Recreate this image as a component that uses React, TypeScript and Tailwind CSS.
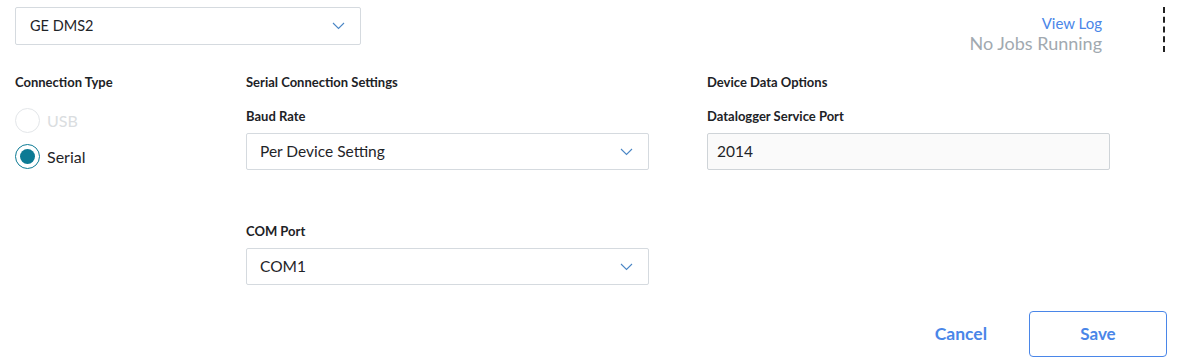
import React from 'react';

const font = { fontFamily: 'Lato, "Open Sans", sans-serif' };

const Chevron: React.FC = () => (
    <svg width="13" height="8" viewBox="0 0 13 8" fill="none" className="shrink-0">
        <path d="M1 1l5.5 5.5L12 1" stroke="#4a86c5" strokeWidth="1.1" />
    </svg>
);

interface SelectBoxProps {
    value: string;
    className?: string;
    textSize?: string;
}

const SelectBox: React.FC<SelectBoxProps> = ({ value, className = '', textSize = 'text-[15.5px]' }) => (
    <div
        className={`h-[37px] flex items-center justify-between border border-[#d5dadf] rounded-[2px] bg-white pl-[13px] pr-[15px] ${className}`}
    >
        <span className={`${textSize} text-[#1f2428]`}>{value}</span>
        <Chevron />
    </div>
);

const Label: React.FC<{ children: React.ReactNode }> = ({ children }) => (
    <div className="text-[13px] font-bold text-[#1d2226] leading-[16px]">{children}</div>
);

export default function App() {
    return (
        <div className="w-[1183px] h-[359px] bg-white relative overflow-hidden" style={font}>
            {/* header row */}
            <div className="flex items-start pl-[15px] pt-[7px]">
                <SelectBox value="GE DMS2" textSize="text-[14.5px]" className="w-[346px] h-[38px] pl-[14px] pr-[15px]" />
                <div className="flex-1" />
                <div className="flex flex-col items-end mr-[61px] pt-[8px]">
                    <span className="text-[15px] leading-[17px] text-[#4a86e8]">View Log</span>
                    <span className="text-[18px] leading-[22px] text-[#a1a9b0]">No Jobs Running</span>
                </div>
                <div className="w-0 h-[45px] border-l-2 border-dashed border-[#222] mr-[18px]" />
            </div>

            {/* form columns */}
            <div className="flex pl-[15px] pt-[20px]">
                <div className="w-[231px] flex flex-col">
                    <Label>Connection Type</Label>
                    <div className="flex items-center gap-[7px] mt-[18px]">
                        <div className="w-[25px] h-[25px] rounded-full border border-[#e3e6e9]" />
                        <span className="text-[16px] text-[#dadde0]">USB</span>
                    </div>
                    <div className="flex items-center gap-[7px] mt-[11px]">
                        <div className="w-[25px] h-[25px] rounded-full border-[1.5px] border-[#0c7a94] flex items-center justify-center">
                            <div className="w-[15px] h-[15px] rounded-full bg-[#0c7a94]" />
                        </div>
                        <span className="text-[16px] text-[#1f2428]">Serial</span>
                    </div>
                </div>

                <div className="w-[461px] flex flex-col">
                    <Label>Serial Connection Settings</Label>
                    <div className="mt-[18px]">
                        <Label>Baud Rate</Label>
                    </div>
                    <SelectBox value="Per Device Setting" className="w-[403px] mt-[9px]" />
                    <div className="mt-[53px]">
                        <Label>COM Port</Label>
                    </div>
                    <SelectBox value="COM1" className="w-[403px] mt-[9px]" />
                </div>

                <div className="w-[403px] flex flex-col">
                    <Label>Device Data Options</Label>
                    <div className="mt-[18px]">
                        <Label>Datalogger Service Port</Label>
                    </div>
                    <div className="w-[403px] h-[37px] mt-[9px] flex items-center border border-[#cfd4d8] rounded-[2px] bg-[#fafafa] pl-[9px]">
                        <span className="text-[15.5px] text-[#1f2428]">2014</span>
                    </div>
                </div>
            </div>

            {/* footer buttons */}
            <div className="flex justify-end items-center pr-[16px] mt-[26px]">
                <button className="text-[17.5px] font-bold text-[#4a86e8] mr-[42px]">Cancel</button>
                <button className="w-[138px] h-[46px] border border-[#4a86e8] rounded-[4px] text-[17px] font-bold text-[#4a86e8]">
                    Save
                </button>
            </div>
        </div>
    );
}
